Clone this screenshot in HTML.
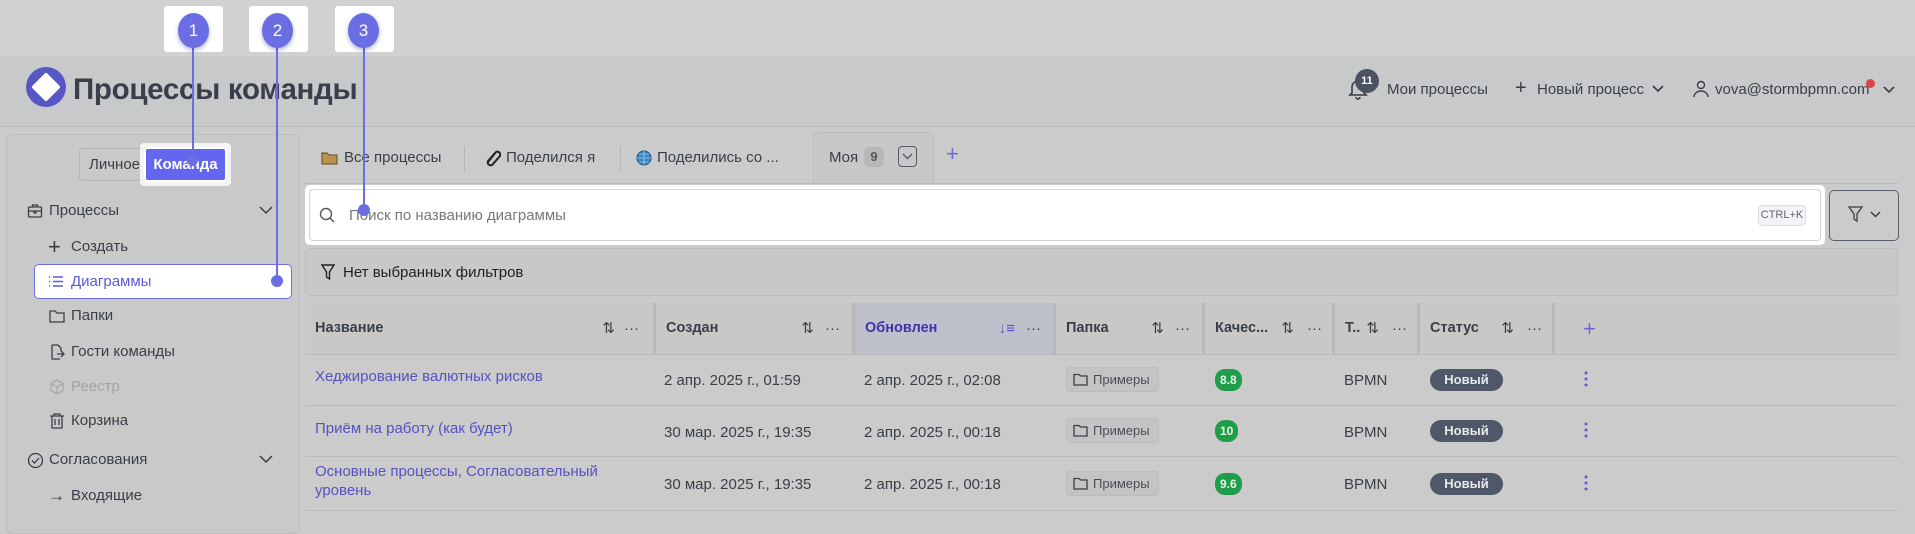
<!DOCTYPE html>
<html><head><meta charset="utf-8"><style>
*{box-sizing:border-box;margin:0;padding:0}
body{width:1915px;height:520px;overflow:hidden;background:#cbcbcb;font-family:"Liberation Sans","DejaVu Sans",sans-serif;color:#3a3e46;position:relative;font-size:15px}
.a{position:absolute;white-space:nowrap}
.top{left:0;top:0;width:1915px;height:56px;background:#d1d1d1}
.hdr{left:0;top:56px;width:1915px;height:71px;background:#c8c9cb;border-bottom:1px solid #b9b9bb}
.mk{background:#fff;border-radius:3px;width:59px;height:46px;top:6px}
.circ{width:31px;height:35px;border-radius:50%;background:#6b6ee2;color:#fff;font-size:17px;text-align:center;line-height:35px;top:13px;box-shadow:0 2px 4px rgba(60,60,160,.4)}
.vl{width:2px;background:#6b6ee2}
.dot{width:12px;height:12px;border-radius:50%;background:#6b6ee2}
.side{left:6px;top:134px;width:294px;height:400px;border:1px solid #bdbdbd;border-radius:6px;background:#c9c9c9}
.mi{font-size:15px}
.th{top:303px;height:51px;background:#c8c8c8;border-right:3px solid #b8b8b8;font-weight:bold;font-size:14.5px;line-height:51px;padding-left:10px}
.rowl{left:305px;width:1593px;height:1px;background:#b9b9b9}
.cell{font-size:15px}
.chip{border:1px solid #bcbcbc;background:#c4c4c4;border-radius:4px;font-size:13px;height:25px;line-height:23px;padding:0 8px 0 26px;color:#4a4d55}
.q{background:#1f9d4a;color:#e8f5ea;border-radius:10px;font-size:12px;font-weight:bold;height:22px;line-height:22px;padding:0 5px}
.st{background:#4f5868;color:#e6e8ec;border-radius:11px;font-size:13px;font-weight:bold;width:73px;height:22px;line-height:22px;text-align:center}
.lnk{color:#5552c2}
.sort{font-size:15px;color:#3a3e46;font-weight:normal}
</style></head><body>
<div class="a top"></div>
<div class="a hdr"></div>

<svg class="a" style="left:25px;top:66px" width="42" height="42" viewBox="0 0 42 42"><circle cx="21" cy="21" r="20" fill="#5656c4"/><path d="M21 9 L33 21 L21 33 L9 21 Z" fill="#fff" stroke="#fff" stroke-width="4" stroke-linejoin="round"/></svg>
<div class="a" style="left:73px;top:73px;font-size:29.5px;font-weight:bold;color:#3a3f4b;letter-spacing:-0.3px">Процессы команды</div>

<svg class="a" style="left:1348px;top:78px" width="20" height="22" viewBox="0 0 20 22"><path d="M4 15V9a6 6 0 0 1 12 0v6l2 2H2z M8 19a2 2 0 0 0 4 0" fill="none" stroke="#3a3e46" stroke-width="1.6"/></svg>
<div class="a" style="left:1355px;top:69px;width:24px;height:24px;border-radius:50%;background:#4b5262;color:#fff;font-size:11px;font-weight:bold;text-align:center;line-height:24px">11</div>
<div class="a" style="left:1387px;top:81px;font-size:15px">Мои процессы</div>
<div class="a" style="left:1515px;top:77px;font-size:20px;font-weight:300">+</div>
<div class="a" style="left:1537px;top:81px;font-size:15px">Новый процесс</div>
<svg class="a" style="left:1652px;top:85px" width="12" height="8"><path d="M1 1l5 5 5-5" fill="none" stroke="#3a3e46" stroke-width="1.6"/></svg>
<svg class="a" style="left:1693px;top:80px" width="16" height="18"><circle cx="8" cy="5" r="3.5" fill="none" stroke="#3a3e46" stroke-width="1.4"/><path d="M1 17a7 6 0 0 1 14 0" fill="none" stroke="#3a3e46" stroke-width="1.4"/></svg>
<div class="a" style="left:1715px;top:81px;font-size:15px">vova@stormbpmn.com</div>
<div class="a" style="left:1866px;top:79px;width:9px;height:9px;border-radius:50%;background:#d44"></div>
<svg class="a" style="left:1883px;top:86px" width="12" height="8"><path d="M1 1l5 5 5-5" fill="none" stroke="#3a3e46" stroke-width="1.6"/></svg>

<div class="a side"></div>
<div class="a" style="left:79px;top:148px;width:70px;height:33px;border:1px solid #b5b5b5;border-radius:4px;background:#c9c9c9;font-size:15px;line-height:31px;padding-left:9px">Личное</div>
<div class="a" style="left:140px;top:143px;width:91px;height:43px;background:#fff;border-radius:4px;opacity:.8"></div>
<div class="a" style="left:144px;top:147px;width:83px;height:35px;border-radius:4px;background:#6366ef;border:2px solid #fff;color:#fff;font-weight:bold;font-size:15px;text-align:center;line-height:31px">Команда</div>

<svg class="a" style="left:27px;top:203px" width="16" height="16"><rect x="1.5" y="4" width="13" height="10" rx="1" fill="none" stroke="#3a3e46" stroke-width="1.3"/><path d="M5.5 4V2h5v2M1.5 8h13M7 8v2h2V8" fill="none" stroke="#3a3e46" stroke-width="1.3"/></svg>
<div class="a mi" style="left:49px;top:202px">Процессы</div>
<svg class="a" style="left:259px;top:206px" width="14" height="9"><path d="M1 1l6 6 6-6" fill="none" stroke="#3a3e46" stroke-width="1.5"/></svg>
<div class="a" style="left:48px;top:234px;font-size:22px;font-weight:300">+</div>
<div class="a mi" style="left:71px;top:238px">Создать</div>
<div class="a" style="left:34px;top:264px;width:258px;height:35px;background:#fff;border:1.5px solid #6b6ee2;border-radius:5px"></div>
<svg class="a" style="left:48px;top:275px" width="16" height="13"><path d="M1 2h1M1 6.5h1M1 11h1M5 2h10M5 6.5h10M5 11h10" stroke="#5b5bd6" stroke-width="1.5"/></svg>
<div class="a mi" style="left:71px;top:273px;color:#5b5bd6">Диаграммы</div>
<svg class="a" style="left:49px;top:309px" width="16" height="14"><path d="M1 2h5l2 2h7v9H1z" fill="none" stroke="#3a3e46" stroke-width="1.3"/></svg>
<div class="a mi" style="left:71px;top:307px">Папки</div>
<svg class="a" style="left:49px;top:344px" width="16" height="16"><path d="M3 1h6l3 3v3M3 1v14h8M8 10h7M12 7l3 3-3 3" fill="none" stroke="#3a3e46" stroke-width="1.3"/></svg>
<div class="a mi" style="left:71px;top:343px">Гости команды</div>
<svg class="a" style="left:49px;top:379px" width="16" height="16"><path d="M8 1l6 3.5v7L8 15l-6-3.5v-7zM2 4.5L8 8l6-3.5M8 8v7" fill="none" stroke="#a5a5a5" stroke-width="1.2"/></svg>
<div class="a mi" style="left:71px;top:378px;color:#a3a3a3">Реестр</div>
<svg class="a" style="left:49px;top:413px" width="16" height="16"><path d="M1 3h14M5 3V1h6v2M3 3v12h10V3M6 6v6M10 6v6" fill="none" stroke="#3a3e46" stroke-width="1.3"/></svg>
<div class="a mi" style="left:71px;top:412px">Корзина</div>
<svg class="a" style="left:27px;top:452px" width="17" height="17"><circle cx="8.5" cy="8.5" r="7" fill="none" stroke="#3a3e46" stroke-width="1.3"/><path d="M5 8.5l2.5 2.5 4.5-5" fill="none" stroke="#3a3e46" stroke-width="1.3"/></svg>
<div class="a mi" style="left:49px;top:451px">Согласования</div>
<svg class="a" style="left:259px;top:455px" width="14" height="9"><path d="M1 1l6 6 6-6" fill="none" stroke="#3a3e46" stroke-width="1.5"/></svg>
<div class="a mi" style="left:48px;top:486px;font-size:17px">→</div>
<div class="a mi" style="left:71px;top:487px">Входящие</div>

<svg class="a" style="left:321px;top:151px" width="17" height="14"><path d="M1 2h5l2 2h8v9H1z" fill="#b8954a" stroke="#5a4a22" stroke-width="1"/></svg>
<div class="a" style="left:344px;top:149px;font-size:15px">Все процессы</div>
<div class="a" style="left:464px;top:146px;width:1px;height:26px;background:#b5b5b5"></div>
<svg class="a" style="left:485px;top:149px" width="16" height="18"><path d="M3 13L11 3a3 3 0 0 1 4 4L7 16a3 3 0 0 1-4-4l7-8" fill="none" stroke="#222" stroke-width="2"/></svg>
<div class="a" style="left:506px;top:149px;font-size:15px">Поделился я</div>
<div class="a" style="left:620px;top:146px;width:1px;height:26px;background:#b5b5b5"></div>
<svg class="a" style="left:636px;top:150px" width="16" height="16"><circle cx="8" cy="8" r="7" fill="#3a86c6" stroke="#1d4f78"/><path d="M1 8h14M8 1v14M3 4h10M3 12h10" stroke="#9dd0f0" stroke-width=".8" fill="none"/></svg>
<div class="a" style="left:657px;top:149px;font-size:15px">Поделились со ...</div>
<div class="a" style="left:813px;top:132px;width:121px;height:52px;border:1px solid #bcbcbc;border-bottom:none;border-radius:5px 5px 0 0;background:#c8c8c8"></div>
<div class="a" style="left:829px;top:149px;font-size:15px">Моя</div>
<div class="a" style="left:864px;top:147px;width:20px;height:20px;border-radius:5px;background:#b7b7b7;font-size:13px;text-align:center;line-height:20px;font-weight:bold;color:#555">9</div>
<div class="a" style="left:898px;top:146px;width:19px;height:21px;border:1.3px solid #555b66;border-radius:4px"></div>
<svg class="a" style="left:902px;top:153px" width="11" height="8"><path d="M1 1l4.5 4.5L10 1" fill="none" stroke="#555b66" stroke-width="1.4"/></svg>
<div class="a" style="left:946px;top:141px;font-size:22px;color:#6a6ad8;font-weight:300">+</div>
<div class="a" style="left:305px;top:183px;width:1593px;height:1px;background:#b8b8b8"></div>

<div class="a" style="left:305px;top:185px;width:1520px;height:60px;background:#fff;border-radius:5px"></div>
<div class="a" style="left:309px;top:189px;width:1512px;height:52px;border:1px solid #d3d3d8;border-radius:4px;background:#fff"></div>
<svg class="a" style="left:319px;top:207px" width="16" height="17"><circle cx="7" cy="7" r="5.5" fill="none" stroke="#555" stroke-width="1.4"/><path d="M11 11l4 4" stroke="#555" stroke-width="1.4"/></svg>
<div class="a" style="left:349px;top:207px;font-size:15px;color:#777">Поиск по названию диаграммы</div>
<div class="a" style="left:1758px;top:205px;width:48px;height:21px;border:1px solid #dde;border-radius:4px;background:#f2f3f7;font-size:11px;color:#666;text-align:center;line-height:19px">CTRL+K</div>
<div class="a" style="left:1829px;top:190px;width:70px;height:51px;border:1.3px solid #5a606b;border-radius:5px"></div>
<svg class="a" style="left:1848px;top:206px" width="15" height="17"><path d="M1 1h13l-5 7v7l-3-2V8z" fill="none" stroke="#3a3e46" stroke-width="1.3"/></svg>
<svg class="a" style="left:1870px;top:211px" width="11" height="7"><path d="M1 1l4.5 4.5L10 1" fill="none" stroke="#3a3e46" stroke-width="1.5"/></svg>

<div class="a" style="left:305px;top:248px;width:1593px;height:48px;border:1px solid #bcbcbc;border-radius:5px;background:#c8c8c8"></div>
<svg class="a" style="left:321px;top:264px" width="14" height="17"><path d="M1 1h12l-4.5 7v7l-3-2V8z" fill="none" stroke="#222" stroke-width="1.4"/></svg>
<div class="a" style="left:343px;top:264px;font-size:15px;color:#222">Нет выбранных фильтров</div>

<div class="a" style="left:305px;top:303px;width:1593px;height:1px;background:#bcbcbc"></div>
<div class="a th" style="left:305px;width:351px">Название<span class="a sort" style="right:38px">⇅</span><span class="a sort" style="right:14px">···</span></div>
<div class="a th" style="left:656px;width:199px">Создан<span class="a sort" style="right:38px">⇅</span><span class="a sort" style="right:12px">···</span></div>
<div class="a th" style="left:855px;width:201px;background:#bec1cc;color:#3d36a8">Обновлен<span class="a sort" style="right:38px;color:#5350c8">↓≡</span><span class="a sort" style="right:12px">···</span></div>
<div class="a th" style="left:1056px;width:149px">Папка<span class="a sort" style="right:38px">⇅</span><span class="a sort" style="right:12px">···</span></div>
<div class="a th" style="left:1205px;width:130px">Качес...<span class="a sort" style="right:38px">⇅</span><span class="a sort" style="right:10px">···</span></div>
<div class="a th" style="left:1335px;width:85px">Т..<span class="a sort" style="right:38px">⇅</span><span class="a sort" style="right:10px">···</span></div>
<div class="a th" style="left:1420px;width:135px">Статус<span class="a sort" style="right:38px">⇅</span><span class="a sort" style="right:10px">···</span></div>
<div class="a th" style="left:1555px;width:343px;border-right:none"><span class="a" style="left:28px;font-size:22px;font-weight:300;color:#6a6ad8">+</span></div>
<div class="a rowl" style="top:354px"></div>
<div class="a rowl" style="top:405px"></div>
<div class="a rowl" style="top:456px"></div>
<div class="a rowl" style="top:510px"></div>

<div class="a cell lnk" style="left:315px;top:368px">Хеджирование валютных рисков</div>
<div class="a cell" style="left:664px;top:372px">2 апр. 2025 г., 01:59</div>
<div class="a cell" style="left:864px;top:372px">2 апр. 2025 г., 02:08</div>
<div class="a cell lnk" style="left:315px;top:420px">Приём на работу (как будет)</div>
<div class="a cell" style="left:664px;top:424px">30 мар. 2025 г., 19:35</div>
<div class="a cell" style="left:864px;top:424px">2 апр. 2025 г., 00:18</div>
<div class="a cell lnk" style="left:315px;top:462px;line-height:19px">Основные процессы, Согласовательный<br>уровень</div>
<div class="a cell" style="left:664px;top:476px">30 мар. 2025 г., 19:35</div>
<div class="a cell" style="left:864px;top:476px">2 апр. 2025 г., 00:18</div>

<div class="a chip" style="left:1066px;top:367px">Примеры</div>
<div class="a chip" style="left:1066px;top:418px">Примеры</div>
<div class="a chip" style="left:1066px;top:471px">Примеры</div>
<svg class="a" style="left:1073px;top:373px" width="15" height="13"><path d="M1 1.5h5l1.5 1.5h6.5v9H1z" fill="none" stroke="#3a3e46" stroke-width="1.3"/></svg>
<svg class="a" style="left:1073px;top:424px" width="15" height="13"><path d="M1 1.5h5l1.5 1.5h6.5v9H1z" fill="none" stroke="#3a3e46" stroke-width="1.3"/></svg>
<svg class="a" style="left:1073px;top:477px" width="15" height="13"><path d="M1 1.5h5l1.5 1.5h6.5v9H1z" fill="none" stroke="#3a3e46" stroke-width="1.3"/></svg>

<div class="a q" style="left:1215px;top:369px">8.8</div>
<div class="a q" style="left:1215px;top:420px">10</div>
<div class="a q" style="left:1215px;top:473px">9.6</div>
<div class="a cell" style="left:1344px;top:372px">BPMN</div>
<div class="a cell" style="left:1344px;top:424px">BPMN</div>
<div class="a cell" style="left:1344px;top:476px">BPMN</div>
<div class="a st" style="left:1430px;top:369px">Новый</div>
<div class="a st" style="left:1430px;top:420px">Новый</div>
<div class="a st" style="left:1430px;top:473px">Новый</div>
<svg class="a" style="left:1584px;top:371px" width="4" height="16"><circle cx="2" cy="2" r="1.5" fill="#5b5bd6"/><circle cx="2" cy="8" r="1.5" fill="#5b5bd6"/><circle cx="2" cy="14" r="1.5" fill="#5b5bd6"/></svg>
<svg class="a" style="left:1584px;top:422px" width="4" height="16"><circle cx="2" cy="2" r="1.5" fill="#5b5bd6"/><circle cx="2" cy="8" r="1.5" fill="#5b5bd6"/><circle cx="2" cy="14" r="1.5" fill="#5b5bd6"/></svg>
<svg class="a" style="left:1584px;top:475px" width="4" height="16"><circle cx="2" cy="2" r="1.5" fill="#5b5bd6"/><circle cx="2" cy="8" r="1.5" fill="#5b5bd6"/><circle cx="2" cy="14" r="1.5" fill="#5b5bd6"/></svg>

<div class="a mk" style="left:164px"></div>
<div class="a mk" style="left:249px"></div>
<div class="a mk" style="left:335px"></div>
<div class="a vl" style="left:192px;top:40px;height:120px"></div>
<div class="a vl" style="left:276px;top:40px;height:240px"></div>
<div class="a vl" style="left:363px;top:40px;height:170px"></div>
<div class="a dot" style="left:187px;top:155px;width:11px;height:11px"></div>
<div class="a dot" style="left:271px;top:275px"></div>
<div class="a dot" style="left:358px;top:204px"></div>
<div class="a circ" style="left:178px">1</div>
<div class="a circ" style="left:262px">2</div>
<div class="a circ" style="left:348px">3</div>
</body></html>
